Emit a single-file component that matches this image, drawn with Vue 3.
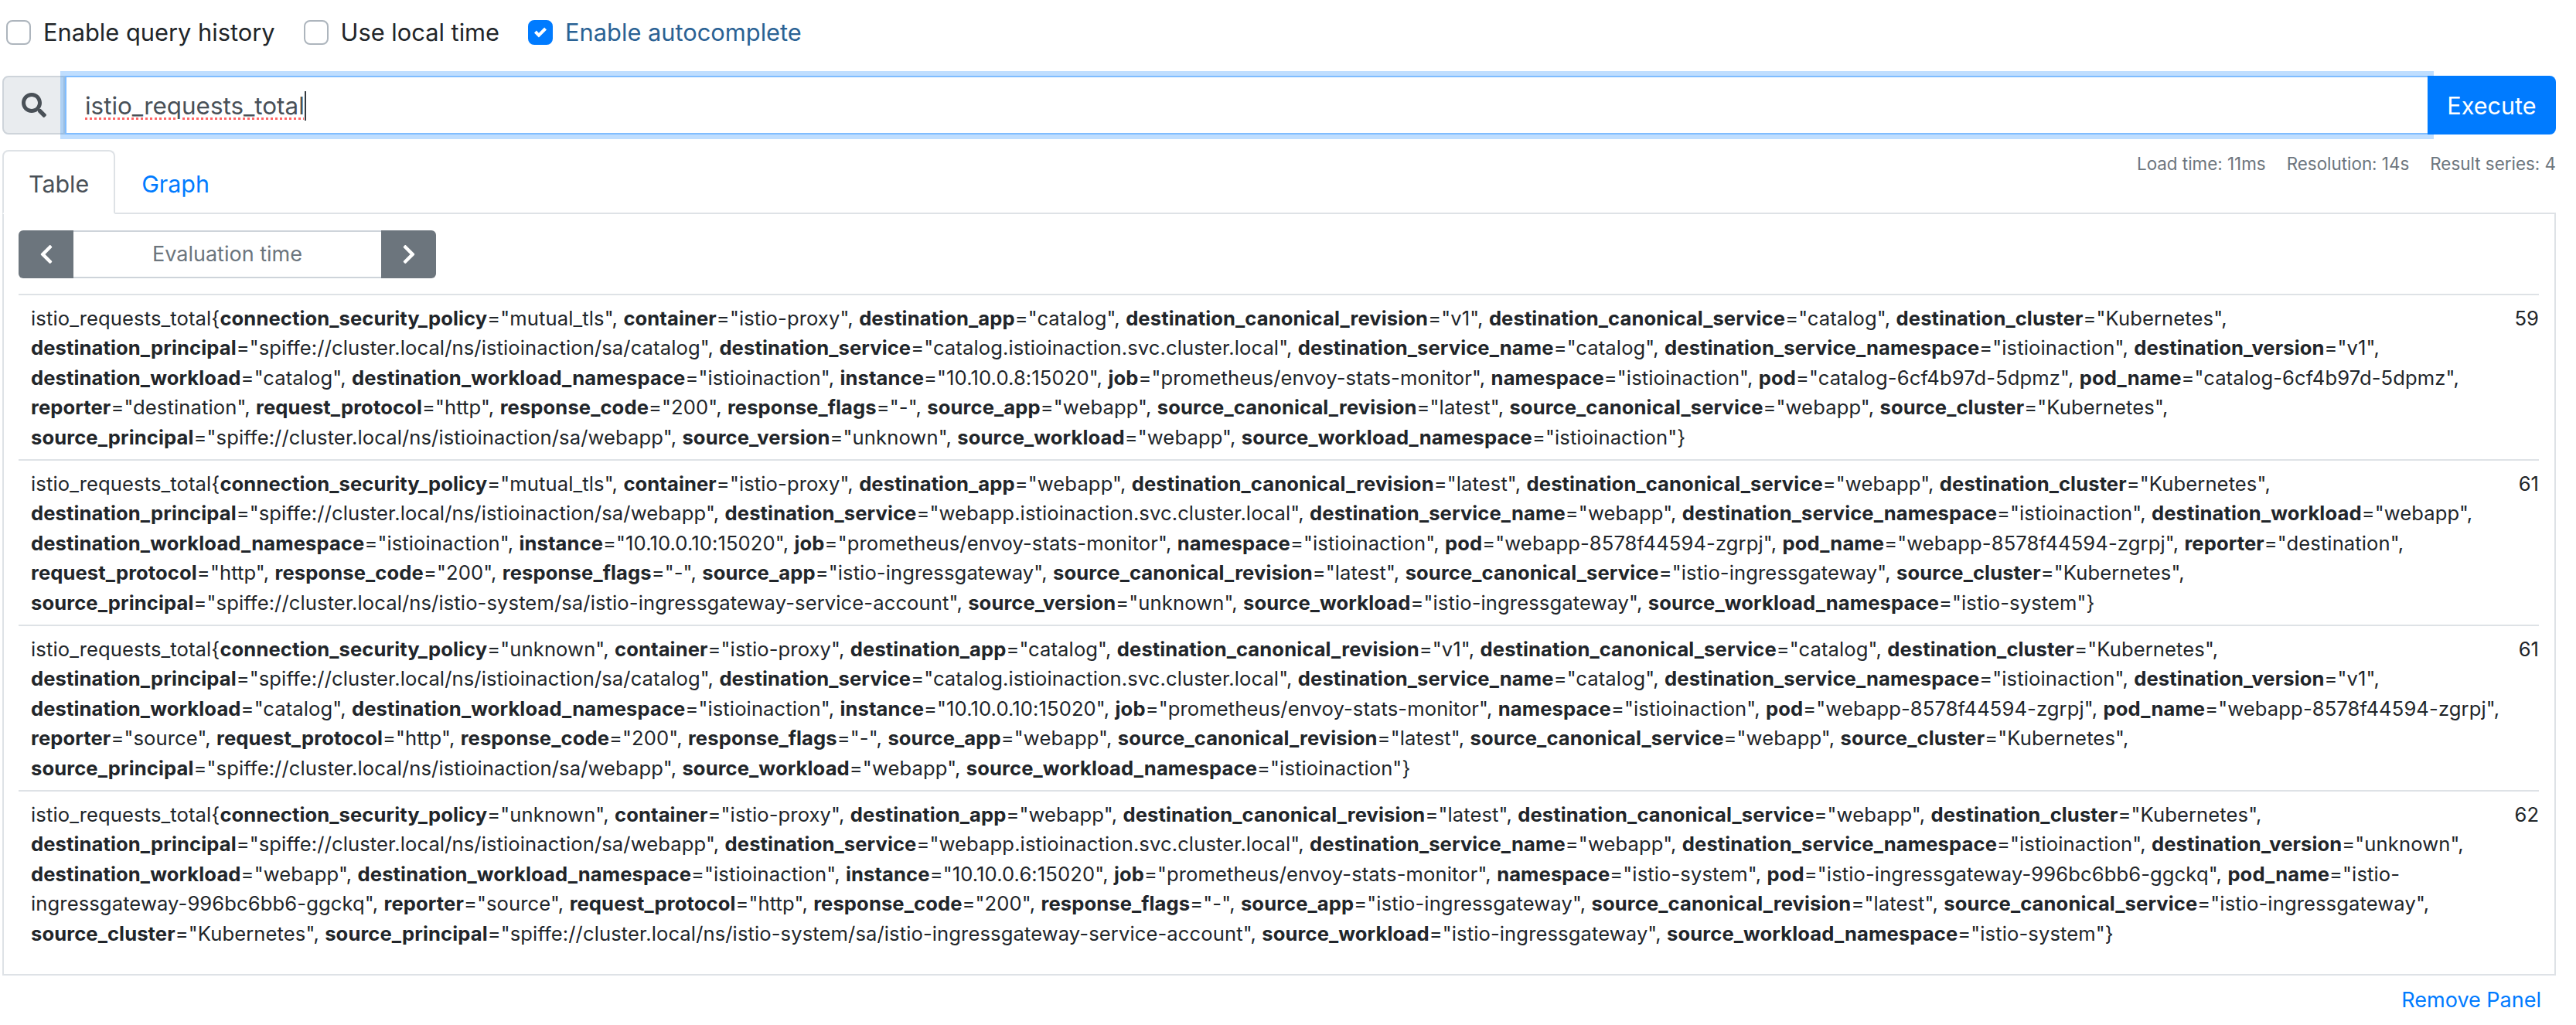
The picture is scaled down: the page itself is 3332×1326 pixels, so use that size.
<script setup>
const series = [
  {
    value: '59',
    lines: [
      'istio_requests_total{connection_security_policy="mutual_tls", container="istio-proxy", destination_app="catalog", destination_canonical_revision="v1", destination_canonical_service="catalog", destination_cluster="Kubernetes",',
      'destination_principal="spiffe://cluster.local/ns/istioinaction/sa/catalog", destination_service="catalog.istioinaction.svc.cluster.local", destination_service_name="catalog", destination_service_namespace="istioinaction", destination_version="v1",',
      'destination_workload="catalog", destination_workload_namespace="istioinaction", instance="10.10.0.8:15020", job="prometheus/envoy-stats-monitor", namespace="istioinaction", pod="catalog-6cf4b97d-5dpmz", pod_name="catalog-6cf4b97d-5dpmz",',
      'reporter="destination", request_protocol="http", response_code="200", response_flags="-", source_app="webapp", source_canonical_revision="latest", source_canonical_service="webapp", source_cluster="Kubernetes",',
      'source_principal="spiffe://cluster.local/ns/istioinaction/sa/webapp", source_version="unknown", source_workload="webapp", source_workload_namespace="istioinaction"}'
    ]
  },
  {
    value: '61',
    lines: [
      'istio_requests_total{connection_security_policy="mutual_tls", container="istio-proxy", destination_app="webapp", destination_canonical_revision="latest", destination_canonical_service="webapp", destination_cluster="Kubernetes",',
      'destination_principal="spiffe://cluster.local/ns/istioinaction/sa/webapp", destination_service="webapp.istioinaction.svc.cluster.local", destination_service_name="webapp", destination_service_namespace="istioinaction", destination_workload="webapp",',
      'destination_workload_namespace="istioinaction", instance="10.10.0.10:15020", job="prometheus/envoy-stats-monitor", namespace="istioinaction", pod="webapp-8578f44594-zgrpj", pod_name="webapp-8578f44594-zgrpj", reporter="destination",',
      'request_protocol="http", response_code="200", response_flags="-", source_app="istio-ingressgateway", source_canonical_revision="latest", source_canonical_service="istio-ingressgateway", source_cluster="Kubernetes",',
      'source_principal="spiffe://cluster.local/ns/istio-system/sa/istio-ingressgateway-service-account", source_version="unknown", source_workload="istio-ingressgateway", source_workload_namespace="istio-system"}'
    ]
  },
  {
    value: '61',
    lines: [
      'istio_requests_total{connection_security_policy="unknown", container="istio-proxy", destination_app="catalog", destination_canonical_revision="v1", destination_canonical_service="catalog", destination_cluster="Kubernetes",',
      'destination_principal="spiffe://cluster.local/ns/istioinaction/sa/catalog", destination_service="catalog.istioinaction.svc.cluster.local", destination_service_name="catalog", destination_service_namespace="istioinaction", destination_version="v1",',
      'destination_workload="catalog", destination_workload_namespace="istioinaction", instance="10.10.0.10:15020", job="prometheus/envoy-stats-monitor", namespace="istioinaction", pod="webapp-8578f44594-zgrpj", pod_name="webapp-8578f44594-zgrpj",',
      'reporter="source", request_protocol="http", response_code="200", response_flags="-", source_app="webapp", source_canonical_revision="latest", source_canonical_service="webapp", source_cluster="Kubernetes",',
      'source_principal="spiffe://cluster.local/ns/istioinaction/sa/webapp", source_workload="webapp", source_workload_namespace="istioinaction"}'
    ]
  },
  {
    value: '62',
    lines: [
      'istio_requests_total{connection_security_policy="unknown", container="istio-proxy", destination_app="webapp", destination_canonical_revision="latest", destination_canonical_service="webapp", destination_cluster="Kubernetes",',
      'destination_principal="spiffe://cluster.local/ns/istioinaction/sa/webapp", destination_service="webapp.istioinaction.svc.cluster.local", destination_service_name="webapp", destination_service_namespace="istioinaction", destination_version="unknown",',
      'destination_workload="webapp", destination_workload_namespace="istioinaction", instance="10.10.0.6:15020", job="prometheus/envoy-stats-monitor", namespace="istio-system", pod="istio-ingressgateway-996bc6bb6-ggckq", pod_name="istio-',
      'ingressgateway-996bc6bb6-ggckq", reporter="source", request_protocol="http", response_code="200", response_flags="-", source_app="istio-ingressgateway", source_canonical_revision="latest", source_canonical_service="istio-ingressgateway",',
      'source_cluster="Kubernetes", source_principal="spiffe://cluster.local/ns/istio-system/sa/istio-ingressgateway-service-account", source_workload="istio-ingressgateway", source_workload_namespace="istio-system"}'
    ]
  }
]

const segments = (line) => line.split(/([a-z_]+)(?==")/)
</script>

<template>
  <div class="page">
    <div class="options">
      <label class="option"><span class="box"></span>Enable query history</label>
      <label class="option"><span class="box"></span>Use local time</label>
      <label class="option checked">
        <span class="box on">
          <svg viewBox="0 0 8 8" width="16" height="16"><path fill="#fff" d="M6.564.75l-3.59 3.612-1.538-1.55L0 4.26l2.974 2.99L8 2.193z" /></svg>
        </span>
        Enable autocomplete
      </label>
    </div>

    <div class="query">
      <div class="addon">
        <svg viewBox="0 0 512 512" width="32" height="32"><path fill="#495057" d="M505 442.7L405.3 343c-4.5-4.5-10.6-7-17-7H372c27.6-35.3 44-79.7 44-128C416 93.1 322.9 0 208 0S0 93.1 0 208s93.1 208 208 208c48.3 0 92.7-16.4 128-44v16.3c0 6.4 2.5 12.5 7 17l99.7 99.7c9.4 9.4 24.6 9.4 33.9 0l28.3-28.3c9.4-9.4 9.4-24.6.1-34zM208 336c-70.7 0-128-57.2-128-128 0-70.7 57.2-128 128-128 70.7 0 128 57.2 128 128 0 70.7-57.2 128-128 128z" /></svg>
      </div>
      <div class="editor"><span class="expr">istio_requests_total</span></div>
      <button class="execute">Execute</button>
    </div>

    <div class="tabbar">
      <a class="tab active">Table</a>
      <a class="tab">Graph</a>
      <div class="meta">
        <span>Load time: 11ms</span>
        <span>Resolution: 14s</span>
        <span>Result series: 4</span>
      </div>
    </div>

    <div class="panel">
      <div class="evaluation">
        <button class="step">
          <svg viewBox="0 0 320 512" width="18" height="28"><path fill="#fff" d="M34.52 239.03L228.87 44.69c9.37-9.37 24.57-9.37 33.94 0l22.67 22.67c9.36 9.36 9.37 24.52.04 33.9L131.49 256l154.02 154.75c9.34 9.38 9.32 24.54-.04 33.9l-22.67 22.67c-9.37 9.37-24.57 9.37-33.94 0L34.52 272.97c-9.37-9.37-9.37-24.57 0-33.94z" /></svg>
        </button>
        <div class="time">Evaluation time</div>
        <button class="step end">
          <svg viewBox="0 0 320 512" width="18" height="28"><path fill="#fff" d="M285.476 272.971L91.132 467.314c-9.373 9.373-24.569 9.373-33.941 0l-22.667-22.667c-9.357-9.357-9.375-24.522-.04-33.901L188.505 256 34.484 101.255c-9.335-9.379-9.317-24.544.04-33.901l22.667-22.667c9.373-9.373 24.569-9.373 33.941 0L285.475 239.03c9.373 9.372 9.373 24.568.001 33.941z" /></svg>
        </button>
      </div>
      <div class="rows">
        <div v-for="(s, i) in series" :key="i" class="row">
          <div class="labels">
            <div v-for="(line, j) in s.lines" :key="j" class="line">
              <template v-for="(seg, k) in segments(line)" :key="k">
                <b v-if="k % 2">{{ seg }}</b><template v-else>{{ seg }}</template>
              </template>
            </div>
          </div>
          <div class="value">{{ s.value }}</div>
        </div>
      </div>
    </div>

    <div class="footer"><a class="remove">Remove Panel</a></div>
  </div>
</template>

<style scoped>
.page {
  width: 3303px;
  margin-left: 3px;
  font-family: Inter, "Noto Sans", "Liberation Sans", sans-serif;
  font-size: 32px;
  line-height: 48px;
  color: #212529;
  background: #fff;
}
.options {
  display: flex;
  gap: 37px;
  padding: 18px 0 0 5px;
  margin-bottom: 32px;
}
.option {
  display: flex;
  align-items: center;
  gap: 16px;
  font-size: 30.8px;
}
.option.checked {
  color: #2a6294;
}
.box {
  width: 32px;
  height: 32px;
  box-sizing: border-box;
  border: 2px solid #adb5bd;
  border-radius: 8px;
  background: #fff;
  display: flex;
  align-items: center;
  justify-content: center;
}
.box.on {
  background: #007bff;
  border-color: #007bff;
}
.query {
  display: flex;
  height: 76px;
}
.addon {
  width: 81px;
  box-sizing: border-box;
  padding-left: 23px;
  display: flex;
  align-items: center;
  background: #e9ecef;
  border: 2px solid #ced4da;
  border-radius: 8px 0 0 8px;
}
.editor {
  flex: 1;
  position: relative;
  z-index: 1;
  box-sizing: border-box;
  display: flex;
  align-items: center;
  padding: 2px 0 0 24px;
  background: #fff;
  border: 2px solid #80bdff;
  box-shadow: 0 0 0 6px rgba(0, 123, 255, 0.25);
  color: #495057;
  font-size: 31.4px;
}
.expr {
  line-height: 38px;
  border-right: 2px solid #343a40;
  text-decoration: underline dotted #f66;
  text-decoration-thickness: 3px;
  text-underline-offset: 4px;
}
.execute {
  position: relative;
  z-index: 2;
  width: 166px;
  margin-left: -2px;
  border: 0;
  padding: 2px 0 0;
  border-radius: 0 8px 8px 0;
  background: #007bff;
  color: #fff;
  font: inherit;
  font-size: 30.6px;
}
.tabbar {
  display: flex;
  margin-top: 20px;
  border-bottom: 2px solid #dee2e6;
  height: 81px;
}
.tab {
  box-sizing: border-box;
  height: 83px;
  padding: 18px 32px 14px;
  border: 2px solid transparent;
  border-radius: 8px 8px 0 0;
  color: #007bff;
  font-size: 30.4px;
}
.tab.active {
  color: #495057;
  background: #fff;
  border-color: #dee2e6 #dee2e6 #fff;
}
.meta {
  margin-left: auto;
  display: flex;
  gap: 27px;
  height: 36px;
  font-size: 22.4px;
  line-height: 36px;
  color: #6c757d;
}
.panel {
  box-sizing: border-box;
  border: 2px solid #dee2e6;
  border-top: 0;
  padding: 21px 20px 24px 19px;
}
.evaluation {
  display: flex;
  width: 540px;
  height: 62px;
  font-size: 27px;
}
.step {
  width: 71px;
  border: 0;
  padding: 0;
  background: #6c757d;
  border-radius: 6px 0 0 6px;
  display: flex;
  align-items: center;
  justify-content: center;
}
.step.end {
  border-radius: 0 6px 6px 0;
}
.time {
  flex: 1;
  box-sizing: border-box;
  border: 2px solid #ced4da;
  border-left: 0;
  border-right: 0;
  text-align: center;
  line-height: 58px;
  color: #6c757d;
}
.rows {
  margin-top: 20px;
}
.row {
  display: flex;
  justify-content: space-between;
  box-sizing: border-box;
  height: 214px;
  padding: 11px 0 9px 16px;
  border-top: 2px solid #dee2e6;
  font-size: 25.6px;
  line-height: 38.4px;
}
.line {
  white-space: nowrap;
  letter-spacing: 0.1px;
}
.line b {
  font-weight: 700;
}
.footer {
  display: flex;
  justify-content: flex-end;
  padding: 12px 19px 0 0;
}
.remove {
  color: #007bff;
  font-size: 27px;
  line-height: 40px;
}
</style>

<style>
html, body {
  background: #fff;
}
</style>
